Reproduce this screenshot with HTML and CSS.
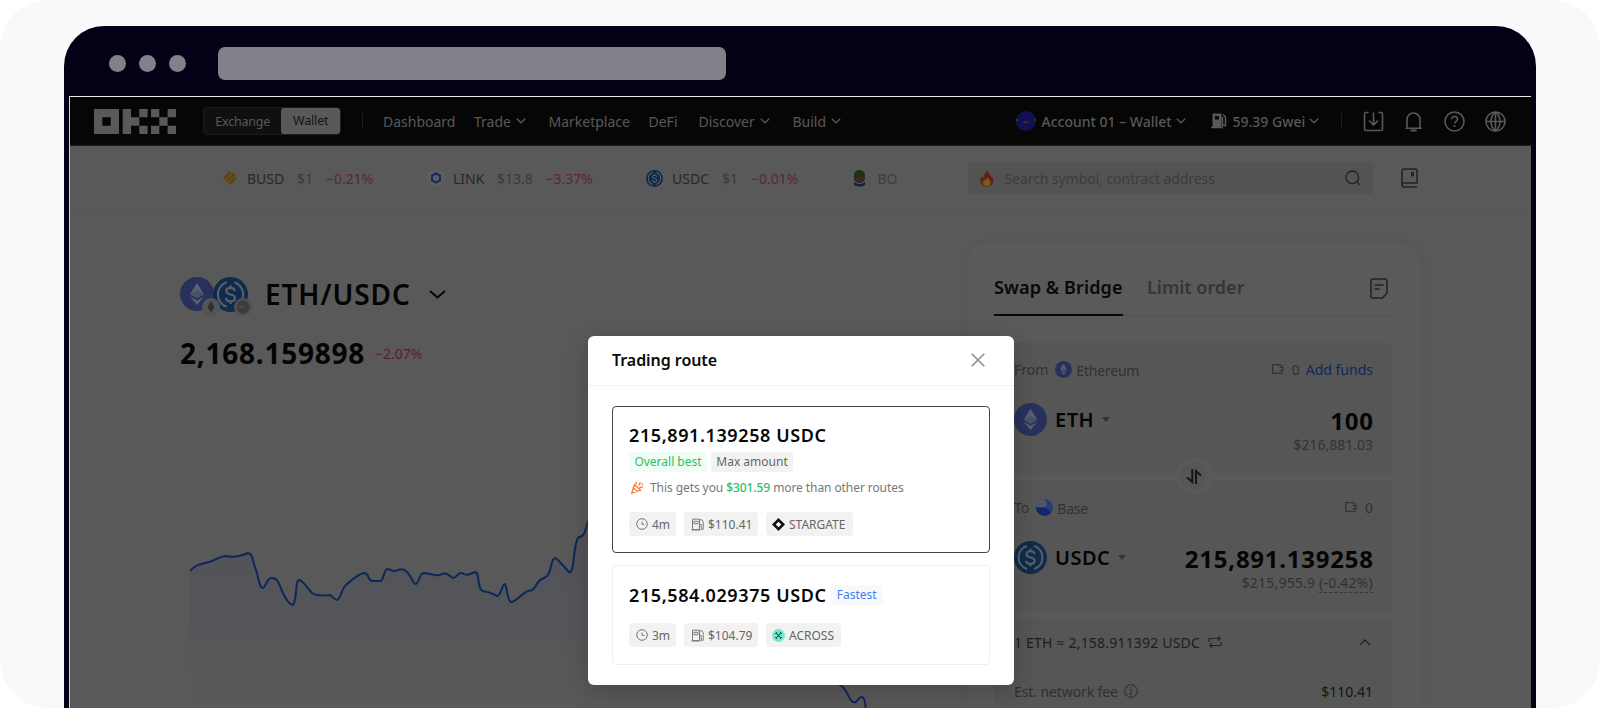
FILE: index.html
```html
<!DOCTYPE html>
<html lang="en">
<head>
    <meta charset="UTF-8">
    <title>Trading route</title>
    <link rel="stylesheet" href="styles.css">
</head>
<body>
    <!-- shared coin and icon shapes -->
    <svg class="defs" width="0" height="0">
        <symbol id="eth" viewBox="0 0 32 32">
            <circle cx="16" cy="16" r="16" fill="#27315c"/>
            <path d="M16 5.500L22.500 16.200 16 20 9.500 16.200z" fill="#595e70"/>
            <path d="M16 12.500L22.500 16.200 16 20 9.500 16.200z" fill="#4a506a"/>
            <path d="M9.500 18.300L16 22l6.500-3.700L16 26.500z" fill="#595e70"/>
        </symbol>
        <symbol id="usdc" viewBox="0 0 32 32">
            <circle cx="16" cy="16" r="16" fill="#102b4b"/>
            <path d="M12.500 4.800a11.800 11.800 0 0 0 0 22.400M19.500 4.800a11.800 11.800 0 0 1 0 22.400" fill="none" stroke="#586069" stroke-width="2"/>
            <path d="M20 12.800c-.3-2-1.800-2.900-4-2.900-2.300 0-3.900 1-3.900 2.900 0 4.300 8 2 8 6.300 0 2-1.700 3.100-4.100 3.100-2.500 0-4-1.100-4.200-3.200M16 7.500v2.400M16 22v2.600" fill="none" stroke="#586069" stroke-width="2"/>
        </symbol>
        <symbol id="down" viewBox="0 0 10 6">
            <path d="M.8.8L5 4.800 9.200.8" fill="none" stroke="currentColor" stroke-width="1.300"/>
        </symbol>
        <symbol id="wallet" viewBox="0 0 12 10">
            <path d="M10 3V2L8.500.7H.7v8.600H10V7M7.500 3.500H11v3H7.500" fill="none" stroke="currentColor" stroke-width="1.200"/>
        </symbol>
        <symbol id="clock" viewBox="0 0 12 12">
            <circle cx="6" cy="6" r="5.300" fill="none" stroke="#777" stroke-width="1"/>
            <path d="M6 3.500v2.800h2.500" fill="none" stroke="#777" stroke-width="1"/>
        </symbol>
        <symbol id="gas" viewBox="0 0 13 13">
            <path d="M1.500 11.500V1.200h7v10.300zM.3 12h9.200M3 3.300h4v2.500H3zM8.500 2.200l2.200-.6 1.500 2.200v7.500h-2V6.500H8.700" fill="none" stroke="#7a7a7a" stroke-width="1"/>
        </symbol>
    </svg>

    <div class="stage">
        <div class="browser">
            <div class="chrome">
                <span class="dot"></span>
                <span class="dot"></span>
                <span class="dot"></span>
                <span class="address"></span>
            </div>

            <div class="page">
                <header class="nav">
                    <svg class="logo" width="82" height="25" viewBox="0 0 82 25" fill="#595959">
                        <path fill-rule="evenodd" d="M0 0h25v25H0zM8.300 8.300v8.400h8.400V8.300z"/>
                        <path d="M28.700 0H37v8.300h8.300v8.400H37V25h-8.300zM45.300 0h8.300v8.300h-8.300zM45.300 16.700h8.300V25h-8.300z"/>
                        <path d="M57 0h8.300v8.300H57zM73.600 0h8.400v8.300h-8.400zM65.300 8.300h8.300v8.400h-8.300zM57 16.700h8.300V25H57zM73.600 16.700h8.400V25h-8.400z"/>
                    </svg>
                    <div class="switch"><span class="off">Exchange</span><span class="on">Wallet</span></div>
                    <i class="bar"></i>
                    <span>Dashboard</span>
                    <span>Trade<svg class="chev" width="10" height="6"><use href="#down"/></svg></span>
                    <span>Marketplace</span>
                    <span>DeFi</span>
                    <span>Discover<svg class="chev" width="10" height="6"><use href="#down"/></svg></span>
                    <span>Build<svg class="chev" width="10" height="6"><use href="#down"/></svg></span>
                    <svg width="20" height="20" viewBox="0 0 20 20">
                        <circle cx="10" cy="10" r="10" fill="#111150"/>
                        <circle cx="10" cy="7" r="4.500" fill="#1b0a58"/>
                        <path d="M7.500 10.500h5v1.500h-5zM0 8h2v2H0zM18 8h2v2h-2z" fill="#443522"/>
                    </svg>
                    <span class="strong account">Account 01 – Wallet<svg class="chev" width="10" height="6"><use href="#down"/></svg></span>
                    <svg width="16" height="16" viewBox="0 0 16 16" fill="none" stroke="#595959">
                        <path d="M2 14V1h8v13z" fill="#595959"/>
                        <path d="M4 3h4v3.500H4z" fill="#080808" stroke="none"/>
                        <path d="M0 14.500h12M10 5h1.500v7.500h3V4L12 1.500" stroke-width="1.500"/>
                    </svg>
                    <span class="strong">59.39 Gwei<svg class="chev" width="10" height="6"><use href="#down"/></svg></span>
                    <i class="bar"></i>
                    <svg class="tool" viewBox="0 0 21 21"><path d="M5.500 1.500H3Q1.500 1.500 1.500 3v15Q1.500 19.500 3 19.500h15q1.500 0 1.500-1.500V3q0-1.500-1.500-1.500h-2.500M10.500 1.500v12M6 9.500l4.500 4.500L15 9.500"/></svg>
                    <svg class="tool" viewBox="0 0 21 21"><path d="M2.500 17.300h16M4 17V8.500a6.500 6.500 0 0 1 13 0V17l1.500.3"/><path d="M7.500 19.500h6" stroke-width="2"/></svg>
                    <svg class="tool" viewBox="0 0 21 21"><circle cx="10.500" cy="10.500" r="9.500"/><path d="M7.600 8.300c.1-1.800 1.300-2.800 3-2.800s2.900 1 2.900 2.600c0 2.100-2.900 2.300-2.900 4.500M10.500 14v2"/></svg>
                    <svg class="tool" viewBox="0 0 21 21"><circle cx="10.500" cy="10.500" r="9.500"/><path d="M1 10.500h19M10.500 1v19M10.500 1C4.500 6 4.500 15 10.500 20M10.500 1c6 5 6 14 0 19"/></svg>
                </header>

                <div class="ticker">
                    <svg width="16" height="16" viewBox="0 0 16 16" stroke="#5e4608" stroke-width="3">
                        <path d="M2 8.500L8.500 2M4 12l8.500-8.500M7.500 14L14 7.500"/>
                    </svg>
                    <span>BUSD</span><span class="price">$1</span><span class="down">−0.21%</span>
                    <svg width="16" height="16" viewBox="0 0 16 16" fill="none" stroke="#192b5e" stroke-width="2">
                        <circle cx="8" cy="8" r="8" fill="#5e5e5e" stroke="none"/>
                        <path d="M8 3.500l4 2.200v4.600l-4 2.200-4-2.200V5.700z"/>
                    </svg>
                    <span>LINK</span><span class="price">$13.8</span><span class="down">−3.37%</span>
                    <svg width="17" height="17"><use href="#usdc"/></svg>
                    <span>USDC</span><span class="price">$1</span><span class="down">−0.01%</span>
                    <svg width="16" height="17" viewBox="0 0 16 17">
                        <rect x="2" y="0" width="11" height="13" rx="5" fill="#1f3018"/>
                        <path d="M4 7h8v4H4z" fill="#45251b"/>
                        <path d="M2 12q6 4 11 0v3q-5 3-11 0z" fill="#111d4c"/>
                    </svg>
                    <span class="cut">BO</span>
                    <div class="search">
                        <svg width="14" height="17" viewBox="0 0 14 17">
                            <path d="M7.500 0c.5 3 3 4.500 4 7 2.500-.5 3.500 9.500-4.500 9.500S-1 9 2.500 6c.3 1 1 1.500 1.500 1.500C4 4 5.500 2 7.500 0z" fill="#642012"/>
                            <path d="M7.500 7.500c.5 2 3 3 3 5.500 0 4-7.500 4-7.500 0 0-1.500.5-2.500 1.500-3.500.5 1 1 1 1.500.5z" fill="#746015"/>
                        </svg>
                        <span>Search symbol, contract address</span>
                        <svg width="16" height="16" viewBox="0 0 16 16" fill="none" stroke="#222" stroke-width="1.300">
                            <circle cx="7.300" cy="7.300" r="6.300"/><path d="M11.800 11.800L15 15"/>
                        </svg>
                    </div>
                    <svg width="17" height="20" viewBox="0 0 17 20" fill="none" stroke="#20222b" stroke-width="1.500">
                        <path d="M16 15H3Q1 15 1 17t2 2h13M1 17V3Q1 1 3 1h11.500Q16 1 16 2.500V15.500"/>
                        <path d="M10 4h3v5l-1.500-1.200L10 9z" fill="#20222b" stroke="none"/>
                    </svg>
                </div>

                <main class="market">
                    <section class="pair">
                        <div class="pair-head">
                            <div class="coins">
                                <svg width="34" height="34"><use href="#eth"/></svg>
                                <svg width="35" height="35"><use href="#usdc"/></svg>
                                <svg class="badge first" viewBox="0 0 18 18"><circle cx="9" cy="9" r="9" fill="#545454"/><path d="M9 3l3.500 6L9 15 5.500 9z" fill="#303030"/></svg>
                                <svg class="badge second" viewBox="0 0 18 18"><circle cx="9" cy="9" r="9" fill="#505050"/><circle cx="9" cy="9" r="6.500" fill="#3b3b3b"/><path d="M3 9h8" stroke="#595959"/></svg>
                            </div>
                            <h1>ETH/USDC</h1>
                            <svg class="pair-chev" width="17" height="9" viewBox="0 0 17 9"><path d="M1 1l7.500 6.500L16 1" fill="none" stroke="#050505" stroke-width="2"/></svg>
                        </div>
                        <div class="quote">
                            <strong>2,168.159898</strong>
                            <span class="change">−2.07%</span>
                        </div>
                        <svg class="chart" width="700" height="208" viewBox="190 500 700 208">
                            <defs>
                                <linearGradient id="fade" x1="0" y1="0" x2="0" y2="1">
                                    <stop offset="0" stop-color="#4f5159"/>
                                    <stop offset="1" stop-color="#595959"/>
                                </linearGradient>
                            </defs>
                            <path fill="url(#fade)" d="M190 571C197 563 204 564 212 561C218 558 223 556 227 556C234 558 241 556 248 553C253 553 252 561 257 573C259 582 260 588 263 588C266 587 267 578 271 578C277 577 279 583 282 591C286 600 290 605 293 605C297 602 295 580 299 580C303 580 307 588 312 593C318 597 326 595 330 595C333 596 334 600 337 600C341 599 341 588 347 584C354 578 358 574 364 573C370 573 367 582 374 581H380C384 581 384 569 387 569C391 569 393 573 398 570C405 567 408 572 414 583C418 588 419 574 423 573C429 573 435 576 440 575C446 571 448 575 453 578C457 578 457 572 462 573C468 577 471 573 475 572C480 572 477 590 483 591C490 592 491 593 497 596C501 596 502 584 505 584C507 586 507 601 511 602C516 602 521 594 528 591C535 591 535 585 540 580C544 577 548 580 551 566C553 557 555 557 558 560L569 572C575 575 573 540 579 537C585 537 585 530 588 522L610 480 840 685C848 688 849 705 856 702C863 693 865 696 866 712H190z"/>
                            <path fill="none" stroke="#0c2859" stroke-width="2" stroke-linejoin="round" d="M190 571C197 563 204 564 212 561C218 558 223 556 227 556C234 558 241 556 248 553C253 553 252 561 257 573C259 582 260 588 263 588C266 587 267 578 271 578C277 577 279 583 282 591C286 600 290 605 293 605C297 602 295 580 299 580C303 580 307 588 312 593C318 597 326 595 330 595C333 596 334 600 337 600C341 599 341 588 347 584C354 578 358 574 364 573C370 573 367 582 374 581H380C384 581 384 569 387 569C391 569 393 573 398 570C405 567 408 572 414 583C418 588 419 574 423 573C429 573 435 576 440 575C446 571 448 575 453 578C457 578 457 572 462 573C468 577 471 573 475 572C480 572 477 590 483 591C490 592 491 593 497 596C501 596 502 584 505 584C507 586 507 601 511 602C516 602 521 594 528 591C535 591 535 585 540 580C544 577 548 580 551 566C553 557 555 557 558 560L569 572C575 575 573 540 579 537C585 537 585 530 588 522L610 480 840 685C848 688 849 705 856 702C863 693 865 696 866 712"/>
                        </svg>
                    </section>

                    <section class="swap">
                        <div class="tabs">
                            <span class="tab active">Swap &amp; Bridge</span>
                            <span class="tab limit">Limit order</span>
                            <svg width="18" height="21" viewBox="0 0 18 21" fill="none" stroke="#20222b" stroke-width="1.500">
                                <path d="M3 1h12q2 0 2 2v12l-4.500 5H3q-2 0-2-2V3q0-2 2-2zM4.500 7h9M4.500 11h5"/>
                            </svg>
                        </div>

                        <div class="box from">
                            <div class="row small">
                                <span>From</span>
                                <svg class="chain" width="17" height="17"><use href="#eth"/></svg>
                                <span class="name">Ethereum</span>
                                <svg class="push" width="12" height="10"><use href="#wallet"/></svg>
                                <span class="zero">0</span>
                                <a class="add">Add funds</a>
                            </div>
                            <div class="row big">
                                <svg width="33" height="33"><use href="#eth"/></svg>
                                <b class="eth-name">ETH</b>
                                <i class="caret"></i>
                                <strong class="push">100</strong>
                            </div>
                            <div class="row fiat"><span class="push">$216,881.03</span></div>
                            <div class="flip">
                                <svg width="16" height="15" viewBox="0 0 16 15" fill="none" stroke="#151515" stroke-width="2"><path d="M6.300 0v13L1 8.500M10 15V2l5 4.500"/></svg>
                            </div>
                        </div>

                        <div class="box to">
                            <div class="row small">
                                <span>To</span>
                                <svg class="chain base" width="17" height="17" viewBox="0 0 17 17"><circle cx="8.500" cy="8.500" r="8.500" fill="#263c72"/><path d="M0 8.500A8.500 8.500 0 0 1 8.500 0L11 5 9 8.500z" fill="#50566a"/><path d="M0 8.500h9.500L15 13.500A8.500 8.500 0 0 1 0 8.500z" fill="#11276a"/></svg>
                                <span class="name">Base</span>
                                <svg class="push" width="12" height="10"><use href="#wallet"/></svg>
                                <span class="zero">0</span>
                            </div>
                            <div class="row big">
                                <svg width="33" height="33"><use href="#usdc"/></svg>
                                <b class="usdc-name">USDC</b>
                                <i class="caret"></i>
                                <strong class="push">215,891.139258</strong>
                            </div>
                            <div class="row fiat"><span class="push">$215,955.9 <u>(-0.42%)</u></span></div>
                        </div>

                        <div class="box rate">
                            <div class="row rate-head">
                                <span class="rate-text">1 ETH ≈ 2,158.911392 USDC</span>
                                <svg width="14" height="12" viewBox="0 0 14 12" fill="none" stroke="#222" stroke-width="1.200"><path d="M1 6V2.500h11M10 .3l2.200 2.200L10 4.700M13 6v3.500H2M4 7.300L1.800 9.500 4 11.700"/></svg>
                                <svg class="push" width="12" height="7" viewBox="0 0 12 7" fill="none" stroke="#222" stroke-width="1.400"><path d="M1 6l5-5 5 5"/></svg>
                            </div>
                            <div class="row fee">
                                <span class="fee-text">Est. network fee</span>
                                <svg width="14" height="14" viewBox="0 0 14 14" fill="none" stroke="#303030" stroke-width="1.100"><circle cx="7" cy="7" r="6.300"/><path d="M5.500 6h1.700L6.500 10.500h1.500M7 3.200v1.300"/></svg>
                                <span class="push cost">$110.41</span>
                            </div>
                        </div>
                    </section>
                </main>
            </div>
        </div>

        <div class="modal">
            <div class="modal-head">
                <h2>Trading route</h2>
                <svg width="14" height="14" viewBox="0 0 14 14" stroke="#8f8f8f" stroke-width="1.600"><path d="M.7.7l12.600 12.600M13.300.7L.7 13.300"/></svg>
            </div>
            <div class="route selected">
                <div class="amount">215,891.139258 USDC</div>
                <div class="tags">
                    <span class="tag best">Overall best</span>
                    <span class="tag max">Max amount</span>
                </div>
                <div class="note">
                    <svg width="13" height="13" viewBox="0 0 13 13" fill="none" stroke="#f27a35" stroke-width="1.300"><path d="M3.500 3.500L.8 12l8.700-2.700zM2.500 7l4 3.500M5 1l.5 2M9 1.200c.5 2-1 2.500-1.500 3.300M8.500 7c1-1 2-.8 3.500-.8M10.500 3.800l1.500-1"/></svg>
                    <span>This gets you <em>$301.59</em> more than other routes</span>
                </div>
                <div class="chips">
                    <span class="chip time"><svg width="12" height="12"><use href="#clock"/></svg>4m</span>
                    <span class="chip cost-chip"><svg width="13" height="13"><use href="#gas"/></svg>$110.41</span>
                    <span class="chip stargate"><svg width="13" height="13" viewBox="0 0 13 13"><path d="M6.500 0L13 6.500 6.500 13 0 6.500z" fill="#111"/><path d="M6.500 3.700l2.800 2.800-2.800 2.800-2.800-2.800z" fill="#f3f3f3"/></svg>STARGATE</span>
                </div>
            </div>
            <div class="route other">
                <div class="amount">215,584.029375 USDC <span class="tag fast">Fastest</span></div>
                <div class="chips">
                    <span class="chip time"><svg width="12" height="12"><use href="#clock"/></svg>3m</span>
                    <span class="chip cost-chip"><svg width="13" height="13"><use href="#gas"/></svg>$104.79</span>
                    <span class="chip across"><svg width="13" height="13" viewBox="0 0 13 13"><circle cx="6.500" cy="6.500" r="6.500" fill="#6ceccd"/><path d="M3 4.500h1.500V3M8.500 3v1.500H10M10 8.500H8.500V10M4.500 10V8.500H3M5 5l3 3M8 5L5 8" fill="none" stroke="#2d5a58" stroke-width="1.100"/></svg>ACROSS</span>
                </div>
            </div>
        </div>
    </div>
</body>
</html>
```

FILE: styles.css
```css
* {
    box-sizing: border-box;
}

body {
    margin: 0;
    background: #fff;
    font-family: "Noto Sans", "Open Sans", sans-serif;
    overflow: hidden;
}

h1, h2 {
    margin: 0;
    font-weight: 600;
}

svg {
    display: block;
    flex: none;
}

i, em {
    font-style: normal;
}

.defs {
    position: absolute;
}

.stage {
    position: relative;
    height: 708px;
    padding: 26px 64px 0;
    background: #f9f9f9;
    border-radius: 48px;
    overflow: hidden;
}

.browser {
    height: 720px;
    padding: 0 5px;
    background: #040015;
    border-radius: 40px 40px 0 0;
}

/* window bar */
.chrome {
    display: flex;
    align-items: center;
    height: 70px;
    padding: 5px 0 0 40px;
}

.dot {
    width: 17px;
    height: 17px;
    margin-right: 13px;
    border-radius: 50%;
    background: #84808a;
}

.address {
    width: 508px;
    height: 33px;
    margin-left: 19px;
    border-radius: 7px;
    background: #84808a;
}

.page {
    height: 640px;
    border-top: 1px solid #e8e8ec;
    border-left: 1px solid #d8d8dc;
    background: #595959;
    overflow: hidden;
}

/* top navigation */
.nav {
    display: grid;
    grid-template-columns: 109px 159px 21px 91px 74.5px 100px 50px 94px 223px 26px 169px 22px 108.500px 21.500px 40px 41px 41px 22px;
    align-items: center;
    height: 49px;
    padding-left: 24px;
    border-bottom: 1px solid #202020;
    background: #060606;
    color: #595959;
    font-size: 14px;
    white-space: nowrap;
}

.nav > span {
    display: flex;
    align-items: center;
}

.nav .strong {
    font-weight: 500;
}

.chev {
    margin: 0 0 0 5px;
}

.nav .strong .chev {
    margin-left: 4px;
}

.switch {
    display: flex;
    align-items: center;
    width: 138px;
    height: 28px;
    border: 1px solid #1b1b1b;
    border-radius: 4px;
    background: #101010;
    font-size: 12.5px;
    letter-spacing: -.2px;
    text-align: center;
}

.off {
    width: 78px;
}

.on {
    width: 59px;
    height: 26px;
    border-radius: 3px;
    background: #595959;
    color: #151515;
    line-height: 26px;
}

.bar {
    width: 1px;
    height: 16px;
    background: #1c1c1c;
}

.tool {
    width: 21px;
    height: 21px;
    fill: none;
    stroke: #595959;
    stroke-width: 1.6;
}

/* price ticker and search */
.ticker {
    display: grid;
    grid-template-columns: 25px 50px 29px 101.5px 25.5px 44px 48.500px 100.500px 26px 50px 29px 101px 25.5px 90px 433px 20px;
    align-items: center;
    height: 64px;
    padding-left: 152px;
    padding-top: 1px;
    border-bottom: 1px solid #545454;
    color: #282828;
    font-size: 14px;
    white-space: nowrap;
}

.price {
    color: #3a3a3a;
}

.ticker .down {
    color: #5e2634;
}

.cut {
    width: 19px;
    overflow: hidden;
    color: #3d3d3d;
}

.search {
    display: flex;
    align-items: center;
    width: 405px;
    height: 32px;
    padding: 0 12px;
    border-radius: 4px;
    background: #535353;
    color: #3c3c3c;
}

.search span {
    flex: 1;
    margin-left: 11px;
    letter-spacing: -.07px;
}

.market {
    display: flex;
    padding-left: 110px;
}

.pair {
    width: 786px;
    padding-top: 64px;
}

.pair-head {
    display: flex;
    align-items: center;
    height: 40px;
}

.coins {
    position: relative;
    display: flex;
    align-items: center;
    width: 85px;
}

.coins svg + svg {
    margin-left: -1px;
}

.coins .badge {
    position: absolute;
    top: 21px;
    width: 18px;
    height: 18px;
}

.first {
    left: 23px;
}

.second {
    left: 55px;
}

.pair h1 {
    width: 164px;
    color: #040404;
    font-size: 28px;
    letter-spacing: .9px;
    line-height: 40px;
    white-space: nowrap;
}

.quote {
    display: flex;
    align-items: center;
    height: 40px;
    margin-top: 19px;
}

.quote strong {
    width: 195px;
    color: #040404;
    font-size: 28px;
    font-weight: 700;
    letter-spacing: .75px;
}

.change {
    color: #621a30;
    font-size: 14px;
}

.chart {
    margin: 127px 0 0 10px;
}

/* swap card */
.swap {
    width: 456px;
    height: 480px;
    margin-top: 32px;
    padding: 27px 29px 0 27px;
    border: 1px solid #565656;
    border-radius: 20px;
    background: #5a5a5a;
    box-shadow: 0 0 8px rgba(0, 0, 0, .04);
}

.tabs {
    display: flex;
    height: 46px;
    width: 399px;
    border-bottom: 1px solid #525252;
    font-size: 18px;
    font-weight: 600;
    line-height: 34px;
    white-space: nowrap;
}

.tab {
    height: 46px;
    color: #353535;
}

.active {
    width: 129px;
    margin-right: 24px;
    border-bottom: 2px solid #080808;
    color: #080808;
    letter-spacing: .1px;
}

.tabs svg {
    margin: 8px 5px 0 auto;
}

.box {
    position: relative;
    width: 399px;
    padding: 0 20px;
    border-radius: 8px;
    background: #565656;
}

.from {
    height: 132px;
    margin-top: 26px;
    padding-top: 17px;
}

.to {
    height: 133px;
    margin-top: 6px;
    padding-top: 17px;
}

.rate {
    height: 130px;
    margin-top: 5px;
}

.row {
    display: flex;
    align-items: center;
    white-space: nowrap;
}

.push {
    margin-left: auto;
}

.small {
    height: 20px;
    color: #323232;
    font-size: 14px;
}

.chain {
    margin-left: 7px;
}

.name {
    margin: 3px 0 0 4px;
    letter-spacing: -.2px;
}

.zero {
    margin-left: 8px;
}

.add {
    margin-left: 6px;
    color: #0f285c;
}

.big {
    height: 33px;
    margin-top: 24px;
    color: #050505;
    font-size: 20px;
}

.big b {
    margin-left: 8px;
    font-weight: 600;
    letter-spacing: .5px;
}

.big strong {
    margin-right: -.7px;
    padding-top: 2px;
    font-size: 24px;
    font-weight: 700;
    letter-spacing: .75px;
}

.caret {
    margin-left: 8px;
    border: 4px solid transparent;
    border-top: 5px solid #30323a;
    border-bottom: 0;
}

.fiat {
    height: 16px;
    color: #323232;
    font-size: 14px;
}

.to .fiat {
    letter-spacing: .2px;
}

.fiat u {
    text-decoration: none;
    border-bottom: 1px dashed #363636;
}

.flip {
    position: absolute;
    left: 182px;
    bottom: -20px;
    z-index: 1;
    display: flex;
    align-items: center;
    justify-content: center;
    width: 36px;
    height: 36px;
    border: 4px solid #5a5a5a;
    border-radius: 50%;
    background: #565656;
}

.rate-head {
    height: 49px;
    border-bottom: 1px solid #515151;
    color: #1d1d1d;
    font-size: 14px;
}

.rate-head .push {
    margin-right: 2px;
}

.rate-text {
    width: 194px;
    letter-spacing: .2px;
}

.fee {
    height: 48px;
    color: #303030;
    font-size: 14px;
}

.fee-text {
    width: 110px;
    letter-spacing: -.1px;
}

.cost {
    color: #151515;
}

/* trading route dialog */
.modal {
    position: absolute;
    left: 588px;
    top: 336px;
    width: 426px;
    height: 349px;
    border-radius: 6px;
    background: #fff;
    box-shadow: 0 6px 24px rgba(0, 0, 0, .2);
    white-space: nowrap;
}

.modal-head {
    display: flex;
    align-items: center;
    justify-content: space-between;
    height: 50px;
    padding: 0 29px 2px 24px;
    border-bottom: 1px solid #f2f2f2;
}

.modal-head h2 {
    color: #0a0a0a;
    font-size: 16px;
    letter-spacing: -.05px;
}

.route {
    width: 378px;
    margin: 0 24px;
    padding: 0 16px;
    border: 1px solid #efefef;
    border-radius: 4px;
}

.selected {
    height: 147px;
    margin-top: 20px;
    padding-top: 15px;
    border-color: #444;
}

.other {
    height: 100px;
    margin-top: 12px;
    padding-top: 16px;
}

.amount {
    display: flex;
    align-items: center;
    height: 25px;
    color: #080808;
    font-size: 18px;
    font-weight: 600;
    letter-spacing: .6px;
}

.tags {
    display: flex;
    gap: 4px;
    margin-top: 5px;
}

.tag {
    height: 20px;
    border-radius: 3px;
    font-size: 12px;
    font-weight: 400;
    letter-spacing: 0;
    line-height: 20px;
    text-align: center;
}

.best {
    width: 78px;
    background: #f0fdf5;
    color: #31bd65;
}

.max {
    width: 82px;
    background: #f2f2f2;
    color: #666;
}

.fast {
    width: 52px;
    margin-left: 4px;
    background: #f9f9fb;
    color: #3b82f6;
}

.note {
    display: flex;
    align-items: center;
    height: 20px;
    margin-top: 5px;
    padding-left: 2px;
    color: #777;
    font-size: 12px;
    letter-spacing: -.08px;
}

.note span {
    margin-left: 6px;
}

.note em {
    color: #31bd65;
    font-weight: 500;
}

.chips {
    display: flex;
    gap: 8px;
    margin-top: 15px;
}

.other .chips {
    margin-top: 16px;
}

.chip {
    display: flex;
    align-items: center;
    gap: 4px;
    height: 24px;
    padding-left: 7px;
    border-radius: 4px;
    background: #f2f2f2;
    color: #666;
    font-size: 12px;
}

.time {
    width: 47px;
}

.cost-chip {
    width: 74px;
}

.stargate {
    width: 87px;
    padding-left: 6px;
}

.across {
    width: 75px;
    padding-left: 6px;
}
```
